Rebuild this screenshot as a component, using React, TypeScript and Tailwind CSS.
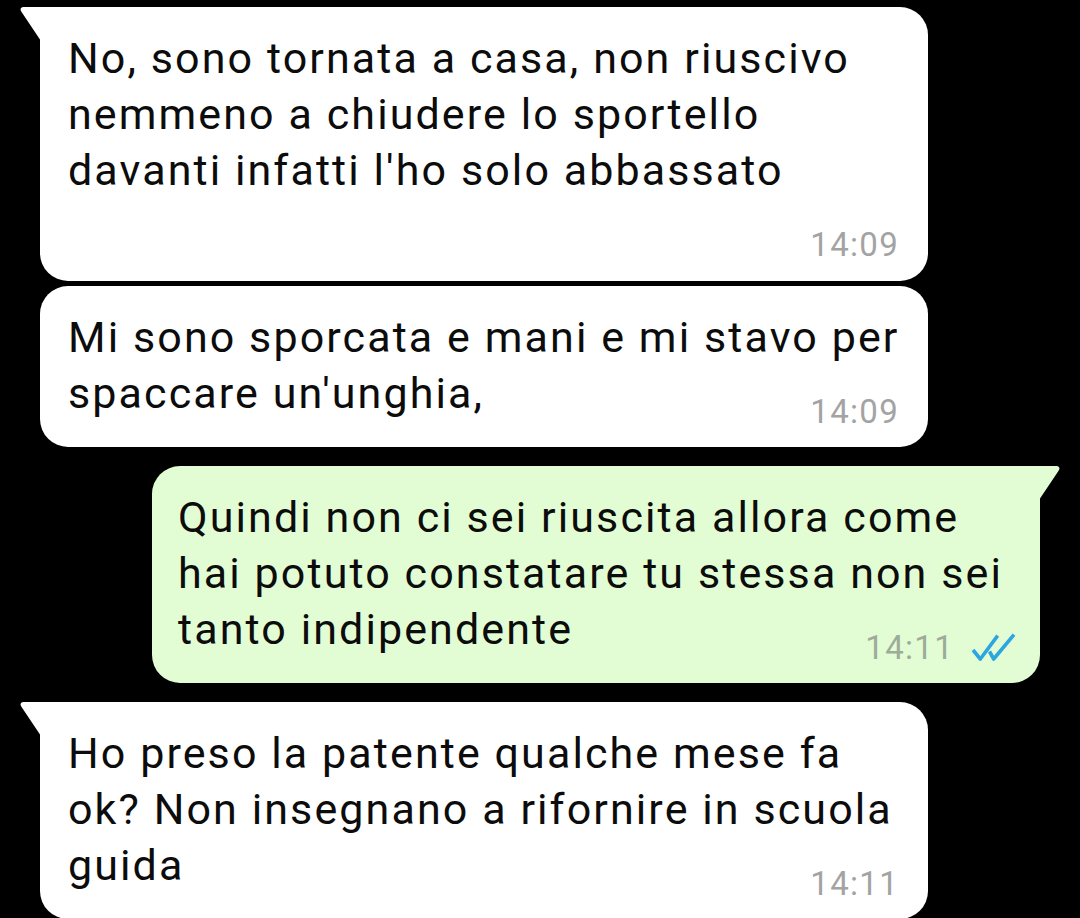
import React from "react";

type Msg = {
  lines: string[];
  time: string;
  out?: boolean;
  tail?: boolean;
  timeMt: string;
  mt: string;
};

const messages: Msg[] = [
  {
    lines: ["No, sono tornata a casa, non riuscivo", "nemmeno a chiudere lo sportello", "davanti infatti l'ho solo abbassato"],
    time: "14:09",
    tail: true,
    timeMt: "mt-[27px] pb-[16px]",
    mt: "mt-[7px]",
  },
  {
    lines: ["Mi sono sporcata e mani e mi stavo per", "spaccare un'unghia,"],
    time: "14:09",
    timeMt: "-mt-[29px] pb-[15px]",
    mt: "mt-[5px]",
  },
  {
    lines: ["Quindi non ci sei riuscita allora come", "hai potuto constatare tu stessa non sei", "tanto indipendente"],
    time: "14:11",
    out: true,
    tail: true,
    timeMt: "-mt-[29px] pb-[15px]",
    mt: "mt-[19px]",
  },
  {
    lines: ["Ho preso la patente qualche mese fa", "ok? Non insegnano a rifornire in scuola", "guida"],
    time: "14:11",
    tail: true,
    timeMt: "-mt-[29px] pb-[15px]",
    mt: "mt-[19px]",
  },
];

function DoubleCheck() {
  return (
    <svg width="46" height="30" viewBox="0 0 46 30" className="ml-[16px] mb-[2px]">
      <path d="M3 18 L10.3 27 L27.7 3.7" fill="none" stroke="#2ba6e1" strokeWidth="3.6" strokeLinejoin="round" />
      <path d="M19.5 19.5 L23.7 27 L44 2.7" fill="none" stroke="#2ba6e1" strokeWidth="3.6" strokeLinejoin="round" />
    </svg>
  );
}

function Bubble({ m }: { m: Msg }) {
  const bg = m.out ? "bg-[#e2fdd3]" : "bg-white";
  return (
    <div className={`${m.mt} flex ${m.out ? "justify-end pr-[40px]" : "pl-[40px]"}`}>
      <div
        className={`relative w-[888px] ${bg} rounded-[28px] ${
          m.tail ? (m.out ? "rounded-tr-none" : "rounded-tl-none") : ""
        } ${m.out ? "pl-[26px] pr-[24px]" : "pl-[28px] pr-[29px]"} pt-[23px]`}
      >
        {m.tail && !m.out && (
          <svg width="21" height="34" viewBox="0 0 21 34" className="absolute -left-[20px] top-0">
            <path d="M21 0 L21 34 L1.4 4.8 C-0.4 2.4 0.8 0 3.4 0 Z" fill="#ffffff" />
          </svg>
        )}
        {m.tail && m.out && (
          <svg width="21" height="34" viewBox="0 0 21 34" className="absolute -right-[20px] top-0">
            <path d="M0 0 L0 34 L19.6 4.8 C21.4 2.4 20.2 0 17.6 0 Z" fill="#e2fdd3" />
          </svg>
        )}
        <div className="text-[43px] leading-[56px] tracking-[2.1px] text-[#0c0c0c] whitespace-nowrap">
          {m.lines.map((l, i) => (
            <div key={i}>{l}</div>
          ))}
        </div>
        <div className={`flex justify-end items-center ${m.timeMt}`}>
          <span className={`text-[33px] leading-[40px] tracking-[1.3px] ${m.out ? "text-[#9fab9a]" : "text-[#a3a3a3]"}`}>{m.time}</span>
          {m.out && <DoubleCheck />}
        </div>
      </div>
    </div>
  );
}

export default function App() {
  return (
    <div className="w-[1080px] h-[918px] overflow-hidden bg-black font-['Roboto','Liberation_Sans',sans-serif]">
      {messages.map((m, i) => (
        <Bubble key={i} m={m} />
      ))}
    </div>
  );
}
